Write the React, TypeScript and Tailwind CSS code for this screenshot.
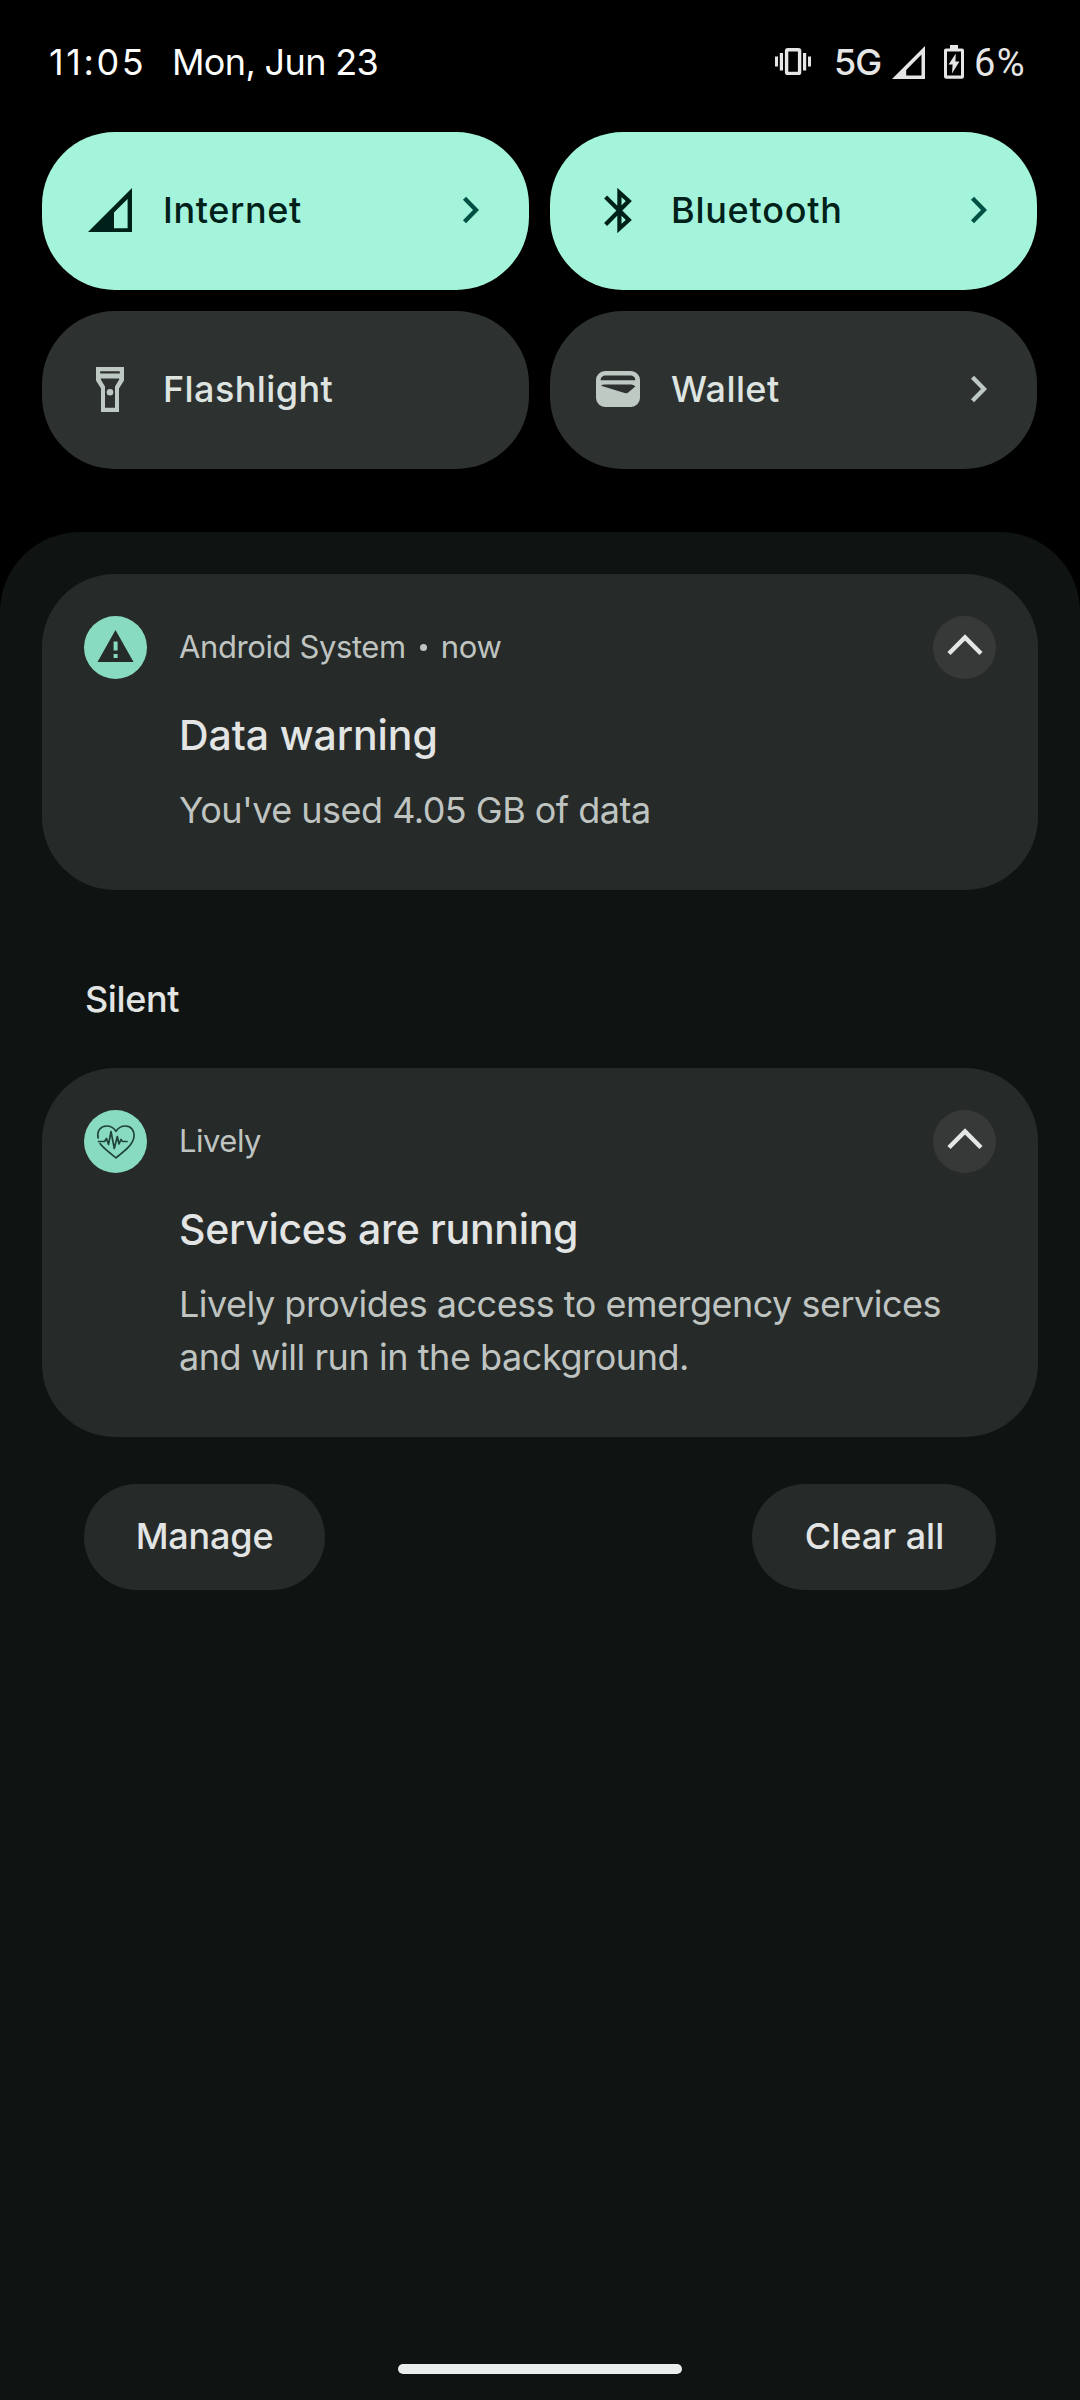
import type { ReactNode } from "react";

function VibrateIcon() {
  return (
    <svg className="h-[28px] w-[36px]" viewBox="0 0 36 28" fill="none" stroke="#e6e6e6">
      <rect x="11.6" y="1.8" width="13" height="23.6" rx="1.2" strokeWidth="3.4" />
      <path d="M1.5 8.500v10M34.5 8.500v10" strokeWidth="3" />
      <path d="M6.400 5v17.500M29.600 5v17.500" strokeWidth="3.200" />
    </svg>
  );
}

function StatusSignalIcon() {
  return (
    <svg className="h-[33px] w-[33px]" viewBox="0 0 33 33">
      <path fillRule="evenodd" fill="#e6e6e6" d="M33 0V33H0ZM29.5 8.6 14.2 24V29.6H29.5Z" />
    </svg>
  );
}

function BatteryIcon() {
  return (
    <svg className="h-[34px] w-[20px]" viewBox="0 0 20 34">
      <path
        fillRule="evenodd"
        fill="#e6e6e6"
        d="M6 0H14V3.4H18A2 2 0 0 1 20 5.4V31.6A2.2 2.2 0 0 1 17.8 33.8H2.2A2.2 2.2 0 0 1 0 31.6V5.4A2 2 0 0 1 2 3.4H6ZM3 6.6V30.4H17V6.6Z"
      />
      <path fill="#e6e6e6" d="M11.8 8.5 4.6 19.6H8.6L8 28.6 15.4 16.6H11.4Z" />
    </svg>
  );
}

function InternetIcon() {
  return (
    <svg className="h-[44px] w-[44px]" viewBox="0 0 44 44">
      <path fillRule="evenodd" fill="#00201a" d="M44 0V44H0ZM39.6 11 26 24.6V40.2H39.6Z" />
    </svg>
  );
}

function BluetoothIcon() {
  return (
    <svg className="h-[45px] w-[28px]" viewBox="0 0 28 45" fill="none" stroke="#00201a" strokeWidth="4.200">
      <path d="M1.600 9 24.800 32 15.400 40.500V4.500L24.800 13 1.600 36.400" />
    </svg>
  );
}

function FlashlightIcon() {
  return (
    <svg className="h-[45px] w-[28px]" viewBox="0 0 28 45">
      <path
        fillRule="evenodd"
        fill="#bfc9c4"
        d="M0 0H28V13.6L23 21.4V45H5V21.4L0 13.6ZM4.2 4.2V6.6H23.8V4.2ZM4.8 11.4V12.6L9 19.6V40.8H19V19.6L23.2 12.6V11.4Z"
      />
      <circle cx="14" cy="25.2" r="3.3" fill="#bfc9c4" />
    </svg>
  );
}

function WalletIcon() {
  return (
    <svg className="h-[36px] w-[44px]" viewBox="0 0 44 36">
      <path
        fillRule="evenodd"
        fill="#bfc9c4"
        d="M9 0H35A9 9 0 0 1 44 9V27A9 9 0 0 1 35 36H9A9 9 0 0 1 0 27V9A9 9 0 0 1 9 0ZM9.500 4.500C7 4.500 4.700 6 4.700 9.200H39.300C39.300 6 37 4.500 34.500 4.500ZM5 14.800 29.500 22.200Q31 22.600 32.200 21.600L39.300 15.600Q38.300 13.800 35.500 13.400H9Q6 13.400 5 14.800Z"
      />
    </svg>
  );
}

function WarningIcon() {
  return (
    <svg className="-mt-1 h-[32px] w-[37px]" viewBox="0 0 37 32">
      <path fill="#252b29" d="M18.500 0 36.500 32H.5Z" />
      <path fill="#88dbc1" d="M16.600 11.500H20.600V20.500H16.600ZM16.600 24H20.600V28H16.600Z" />
    </svg>
  );
}

function HeartPulseIcon() {
  return (
    <svg className="h-[36px] w-[40px]" viewBox="0 0 40 36" fill="none" stroke="#20443b" strokeWidth="1.700" strokeLinecap="round" strokeLinejoin="round">
      <path d="M2.200 14C.5 6.500 5 2 10.500 2 15 2 18 4 20 7.300 22 4 25.500 2 29.500 2 35 2 38.500 6.500 38 12.500 37.500 20.500 28 27.500 20 33.800 14.500 29.500 7.500 24.500 4 19.600" />
      <path d="M2.500 17.500H8.500L10.500 14.500 12.500 20.500 15 7.500 18.300 24.500 21.300 12.500 23 20 25 15.500 26.500 17.500H31" />
    </svg>
  );
}

function ChevronRight({ stroke }: { stroke: string }) {
  return (
    <svg className="h-[28px] w-[18px]" viewBox="0 0 18 28" fill="none" stroke={stroke} strokeWidth="4.300">
      <path d="M2.500 2.200 14 14 2.500 25.800" />
    </svg>
  );
}

function ExpandButton() {
  return (
    <div className="ml-auto flex size-[63px] items-center justify-center rounded-full bg-[#363938]">
      <svg className="-mt-1.5 h-[22px] w-[36px]" viewBox="0 0 36 22" fill="none" stroke="#e3e6e4" strokeWidth="4.500">
        <path d="M2 19.500 18 3.500 34 19.500" />
      </svg>
    </div>
  );
}

function Tile({ icon, label, spacing, active, arrow }: { icon: ReactNode; label: string; spacing: string; active?: boolean; arrow?: boolean }) {
  return (
    <div className={`flex h-[158px] items-center rounded-[73px] pb-[2px] pl-[45px] pr-[49px] ${active ? "bg-[#a3f4da] text-[#00201a]" : "bg-[#2d312f] text-[#dee4e0]"}`}>
      <div className="flex w-[46px] justify-center">{icon}</div>
      <div className={`ml-[30px] whitespace-nowrap text-[36px] font-medium ${spacing}`}>{label}</div>
      {arrow && (
        <div className="ml-auto">
          <ChevronRight stroke={active ? "#005143" : "#bfc9c4"} />
        </div>
      )}
    </div>
  );
}

function Notification({ icon, header, title, children }: { icon: ReactNode; header: ReactNode; title: ReactNode; children: ReactNode }) {
  return (
    <div className="rounded-[73px] bg-[#262a29] px-[42px] pb-[53px] pt-[42px]">
      <div className="flex h-[63px] items-center">
        <div className="flex size-[63px] items-center justify-center rounded-full bg-[#88dbc1]">{icon}</div>
        <div className="ml-[32px] flex items-center whitespace-nowrap pb-[1px] text-[31px] text-[#bfc4c1]">{header}</div>
        <ExpandButton />
      </div>
      <div className="ml-[95px] mt-[31px] text-[41px] font-medium leading-[50px] text-[#e2e5e3]">{title}</div>
      <div className="ml-[95px] mt-[24px] whitespace-nowrap text-[36px] leading-[53px] text-[#bfc4c1]">{children}</div>
    </div>
  );
}

export default function App() {
  return (
    <div className="flex h-[2400px] w-[1080px] flex-col bg-black font-['Inter',sans-serif]">
      <div className="flex h-[132px] shrink-0 items-start pl-[49px] pr-[52px] pt-[39px] text-[36px] leading-[46px] text-white">
        <span className="w-[123px] tracking-[2.6px]">11:05</span>
        <span className="tracking-[-0.65px]">Mon, Jun 23</span>
        <div className="ml-auto flex h-[46px] items-center text-[#e6e6e6]">
          <VibrateIcon />
          <span className="ml-[23px] w-[58px] font-medium tracking-[-1px]">5G</span>
          <StatusSignalIcon />
          <div className="ml-[19px]">
            <BatteryIcon />
          </div>
          <span className="ml-[10px] w-[54px] pt-px font-['Roboto',sans-serif] text-[38px] tracking-[1.5px]">6%</span>
        </div>
      </div>

      <div className="grid shrink-0 grid-cols-[487px_487px] gap-[21px] px-[42px]">
        <Tile icon={<InternetIcon />} label="Internet" spacing="tracking-[0.6px]" active arrow />
        <Tile icon={<BluetoothIcon />} label="Bluetooth" spacing="tracking-[0.75px]" active arrow />
        <Tile icon={<FlashlightIcon />} label="Flashlight" spacing="tracking-[0.4px]" />
        <Tile icon={<WalletIcon />} label="Wallet" spacing="tracking-[0.4px]" arrow />
      </div>

      <div className="mt-[63px] flex grow flex-col rounded-t-[80px] bg-[#0f1412] px-[42px] pt-[42px]">
        <Notification
          icon={<WarningIcon />}
          header={
            <>
              <span className="tracking-[-0.4px]">Android System</span>
              <span className="mx-[14px] size-[7px] rounded-full bg-[#bfc4c1]" />
              <span className="tracking-[-0.3px]">now</span>
            </>
          }
          title={<span className="tracking-[-0.1px]">Data warning</span>}
        >
          <span className="tracking-[-0.52px]">You've used 4.05 GB of data</span>
        </Notification>

        <div className="mb-[46px] ml-[43px] mt-[86px] text-[36px] font-medium leading-[46px] tracking-[-0.4px] text-[#e2e5e3]">Silent</div>

        <Notification icon={<HeartPulseIcon />} header={<span className="tracking-[-0.5px]">Lively</span>} title={<span className="tracking-[-0.31px]">Services are running</span>}>
          <div className="tracking-[-0.5px]">Lively provides access to emergency services</div>
          <div className="tracking-[-0.44px]">and will run in the background.</div>
        </Notification>

        <div className="mt-[47px] flex justify-between px-[42px] text-[36px] font-medium text-[#e2e5e3]">
          <div className="flex h-[106px] w-[241px] items-center justify-center rounded-full bg-[#262a29] pb-[2px] tracking-[-0.2px]">Manage</div>
          <div className="flex h-[106px] w-[244px] items-center justify-center whitespace-nowrap rounded-full bg-[#262a29] pb-[2px] pl-px">Clear all</div>
        </div>

        <div className="mb-[26px] mt-auto h-[10px] w-[284px] self-center rounded-full bg-[#e9edeb]" />
      </div>
    </div>
  );
}
